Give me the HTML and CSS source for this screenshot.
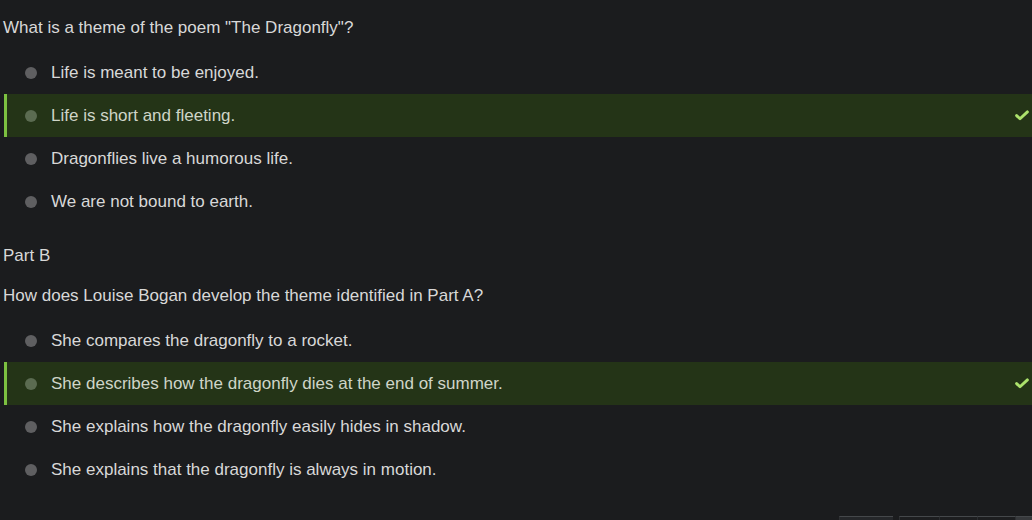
FILE: index.html
```html
<!DOCTYPE html>
<html>
<head>
<meta charset="utf-8">
<link rel="stylesheet" href="styles.css">
</head>
<body>
<div class="page">
  <p class="question q1">What is a theme of the poem "The Dragonfly"?</p>
  <ul class="options">
    <li class="option"><span class="dot"></span><span class="label">Life is meant to be enjoyed.</span></li>
    <li class="option correct"><span class="dot"></span><span class="label">Life is short and fleeting.</span><svg class="check" viewBox="0 0 14 11" width="14" height="11"><path d="M1.6 5.6 L5 8.8 L12.4 1.9" fill="none" stroke="#ace26c" stroke-width="2.9" stroke-linecap="round" stroke-linejoin="round"/></svg></li>
    <li class="option"><span class="dot"></span><span class="label">Dragonflies live a humorous life.</span></li>
    <li class="option"><span class="dot"></span><span class="label">We are not bound to earth.</span></li>
  </ul>
  <p class="part">Part B</p>
  <p class="question q2">How does Louise Bogan develop the theme identified in Part A?</p>
  <ul class="options">
    <li class="option"><span class="dot"></span><span class="label">She compares the dragonfly to a rocket.</span></li>
    <li class="option correct"><span class="dot"></span><span class="label">She describes how the dragonfly dies at the end of summer.</span><svg class="check" viewBox="0 0 14 11" width="14" height="11"><path d="M1.6 5.6 L5 8.8 L12.4 1.9" fill="none" stroke="#ace26c" stroke-width="2.9" stroke-linecap="round" stroke-linejoin="round"/></svg></li>
    <li class="option"><span class="dot"></span><span class="label">She explains how the dragonfly easily hides in shadow.</span></li>
    <li class="option"><span class="dot"></span><span class="label">She explains that the dragonfly is always in motion.</span></li>
  </ul>
  <div class="pager">
    <span class="pbtn wide"></span>
    <span class="pbtn b1"></span>
    <span class="pbtn"></span>
    <span class="pbtn"></span>
    <span class="pbtn last"></span>
  </div>
</div>
</body>
</html>
```
FILE: styles.css
```css
html, body {
  margin: 0;
  padding: 0;
  background: #1b1c1e;
  height: 520px;
  overflow: hidden;
}
body {
  font-family: "Liberation Sans", Arial, sans-serif;
  font-size: 17px;
  color: #d8d8d8;
}
.page {
  display: flex;
  flex-direction: column;
}
p {
  margin: 0;
  line-height: 18px;
  padding-left: 3px;
}
.q1 {
  margin-top: 19px;
  margin-bottom: 14px;
}
.part {
  margin-top: 24px;
}
.q2 {
  margin-top: 22px;
  margin-bottom: 14px;
}
.options {
  list-style: none;
  margin: 0;
  padding: 0;
}
.option {
  height: 43px;
  display: flex;
  align-items: center;
  margin-left: 4px;
  padding-left: 18px;
  border-left: 3px solid transparent;
}
.dot {
  width: 12px;
  height: 12px;
  border-radius: 50%;
  background: #5f5f61;
  flex: none;
}
.label {
  margin-left: 14px;
  flex: 1;
}
.option.correct {
  background: #243417;
  border-left-color: #7dc141;
}
.option.correct .dot {
  background: #5b6b51;
}
.option.correct .label {
  color: #cfd5c8;
}
.check {
  margin-right: 3px;
  flex: none;
}
.pager {
  display: flex;
  justify-content: flex-end;
  margin-top: 25px;
}
.pbtn {
  width: 37px;
  height: 20px;
  border-top: 1px solid #45484b;
  border-left: 1px solid #2c2e31;
  background: #1d1e20;
}
.pbtn.wide {
  width: 53px;
  margin-right: 6px;
  background: #25272a;
}
.pbtn.b1 {
  width: 39px;
}
.pbtn.last {
  width: 16px;
  background: #37393c;
}
```
